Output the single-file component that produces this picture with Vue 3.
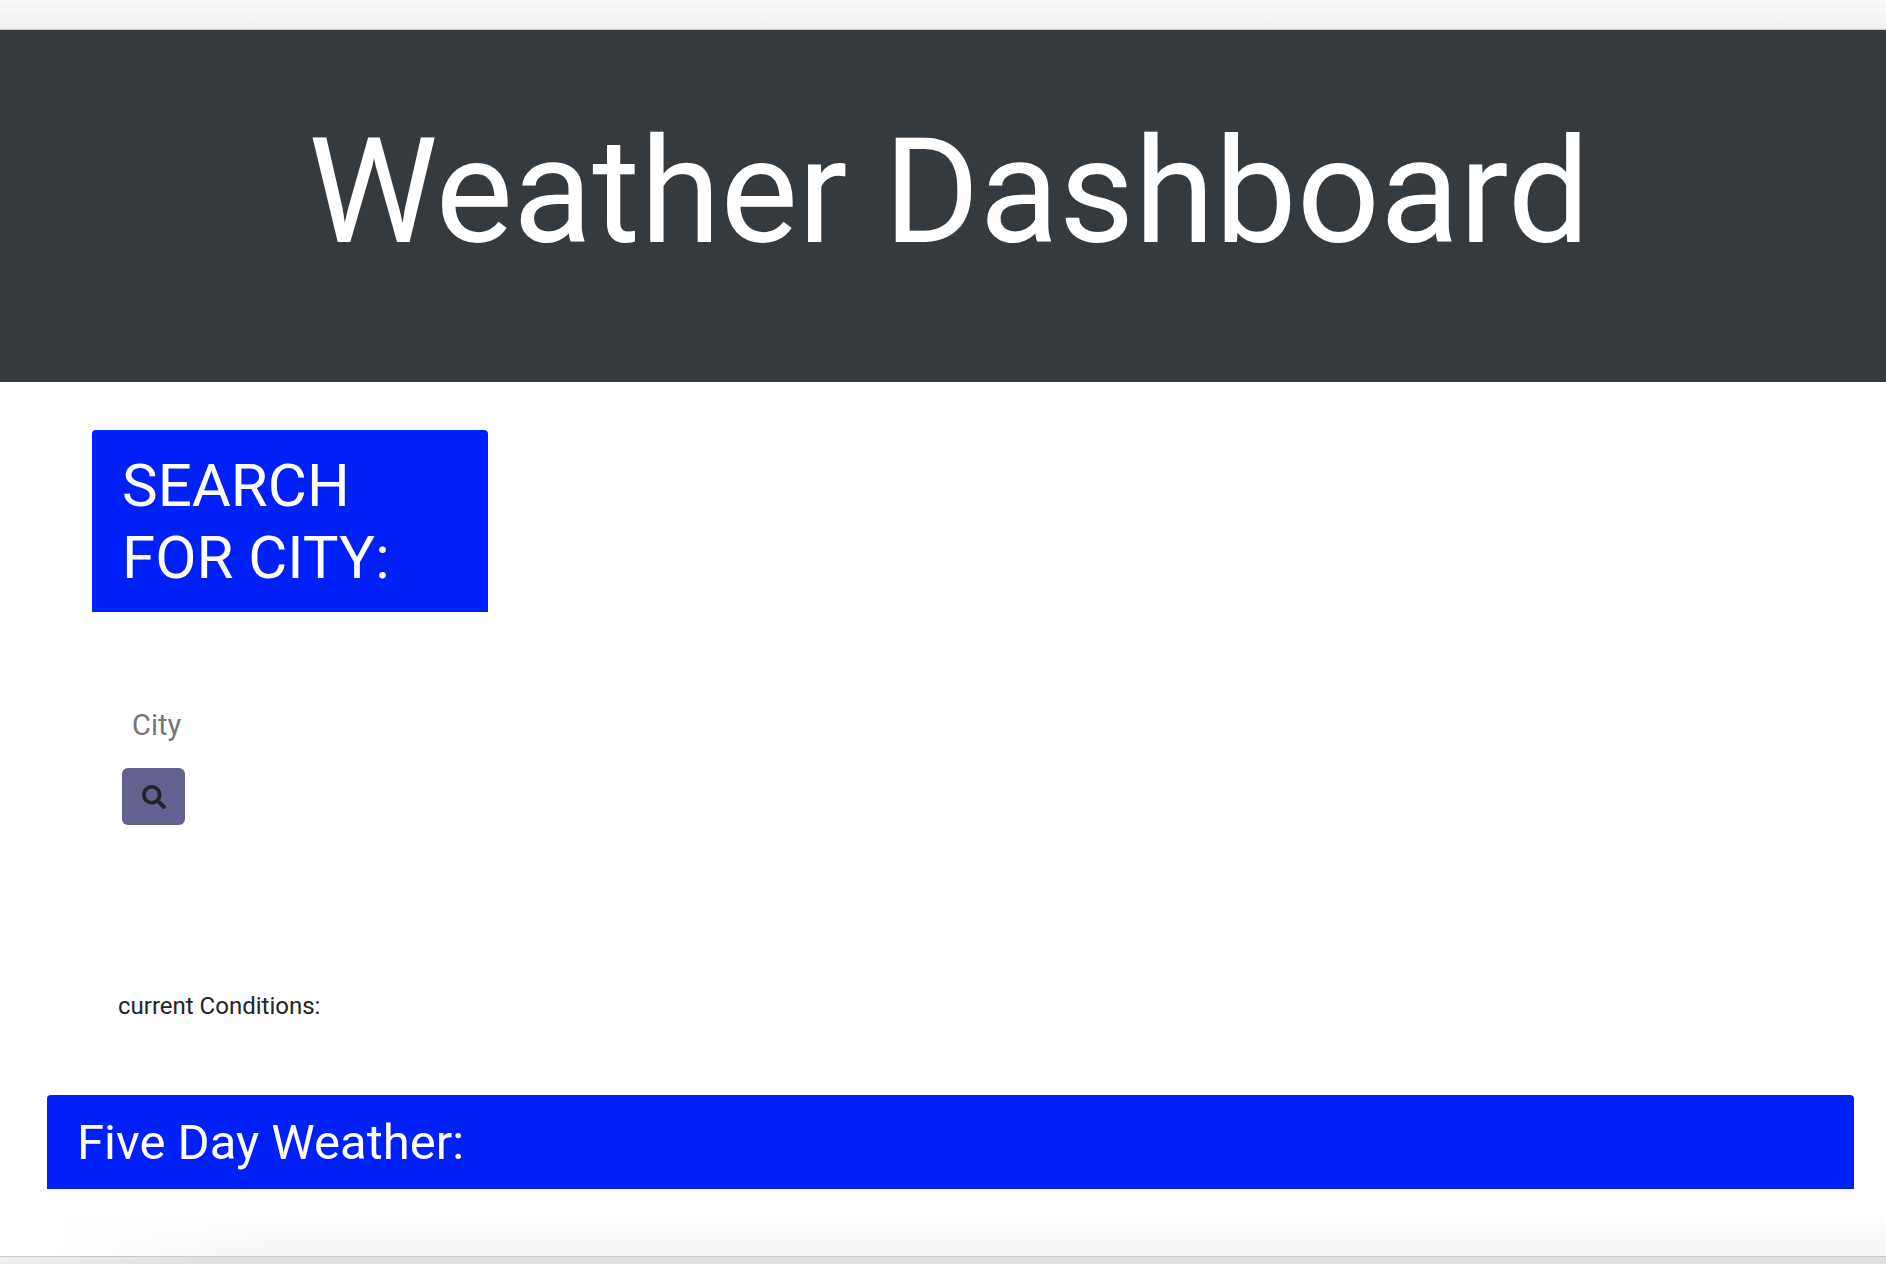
<script setup>
import { ref } from 'vue'

const city = ref('')
</script>

<template>
  <div class="page">
    <div class="top-edge"></div>
    <header class="hero">
      <h1>Weather Dashboard</h1>
    </header>
    <main>
      <section class="search">
        <h2 class="search-title">SEARCH FOR CITY:</h2>
        <form class="search-form" @submit.prevent>
          <input v-model="city" type="text" placeholder="City" aria-label="City" />
          <button type="submit" aria-label="Search">
            <svg viewBox="0 0 512 512" aria-hidden="true">
              <path
                fill="currentColor"
                d="M505 442.700 405.300 343c-4.500-4.500-10.600-7-17-7H372c27.600-35.300 44-79.700 44-128C416 93.100 322.900 0 208 0S0 93.100 0 208s93.100 208 208 208c48.300 0 92.700-16.400 128-44v16.300c0 6.400 2.500 12.500 7 17l99.700 99.700c9.400 9.400 24.600 9.400 33.900 0l28.300-28.300c9.400-9.400 9.400-24.600.1-34zM208 336c-70.700 0-128-57.200-128-128 0-70.700 57.200-128 128-128 70.700 0 128 57.200 128 128 0 70.700-57.200 128-128 128z"
              />
            </svg>
          </button>
        </form>
      </section>
      <p class="conditions">current Conditions:</p>
      <h3 class="forecast-title">Five Day Weather:</h3>
    </main>
    <footer class="bottom-edge">
      <div class="shade"></div>
      <div class="bar"></div>
    </footer>
  </div>
</template>

<style>
body {
  margin: 0;
  background: #fff;
}
</style>

<style scoped>
.page {
  display: flex;
  flex-direction: column;
  min-height: 100vh;
  font-family: Roboto, "Liberation Sans", sans-serif;
  color: #212529;
}

h1,
h2,
h3,
p {
  margin: 0;
  font-weight: 400;
}

.top-edge {
  height: 29px;
  background: linear-gradient(#fafafa, #f0f0f0);
  border-bottom: 1px solid #c9ced0;
}

.hero {
  padding: 77px 36px 103px 48px;
  background: #353a3e;
  color: #fff;
  text-align: center;
}

.hero h1 {
  font-size: 146px;
  line-height: 172px;
}

main {
  padding: 48px 32px 0 47px;
}

.search {
  width: 396px;
  margin-left: 45px;
}

.search-title {
  padding: 20px 30px 18px;
  border-radius: 4px 4px 0 0;
  background: #0020f8;
  color: #fff;
  font-size: 60px;
  line-height: 72px;
}

.search-form {
  display: flex;
  flex-direction: column;
  align-items: flex-start;
  gap: 14px;
  padding: 86px 30px 0;
}

.search-form input {
  box-sizing: border-box;
  width: 100%;
  height: 56px;
  padding: 0 10px 2px;
  border: 0;
  background: transparent;
  font: inherit;
  font-size: 29px;
}

.search-form input::placeholder {
  color: #757575;
}

.search-form button {
  display: flex;
  align-items: center;
  justify-content: center;
  width: 63px;
  height: 57px;
  padding: 0;
  border: 0;
  border-radius: 6px;
  background: #62618f;
  color: #212529;
}

.search-form svg {
  width: 24px;
  height: 24px;
}

.conditions {
  margin: 163px 0 71px 71px;
  font-size: 24px;
  line-height: 36px;
}

.forecast-title {
  padding: 19px 30px 17px;
  border-radius: 4px 4px 0 0;
  background: #0020f8;
  color: #fff;
  font-size: 49px;
  line-height: 58px;
}

.bottom-edge {
  margin-top: auto;
}

.shade {
  height: 40px;
  background:
    linear-gradient(90deg, #fff 60px, transparent 300px),
    linear-gradient(#fff, #f5f5f5);
}

.bar {
  height: 7px;
  border-top: 1px solid #c8c8c8;
  background: linear-gradient(90deg, #eee, #e2e2e2 200px);
}
</style>
